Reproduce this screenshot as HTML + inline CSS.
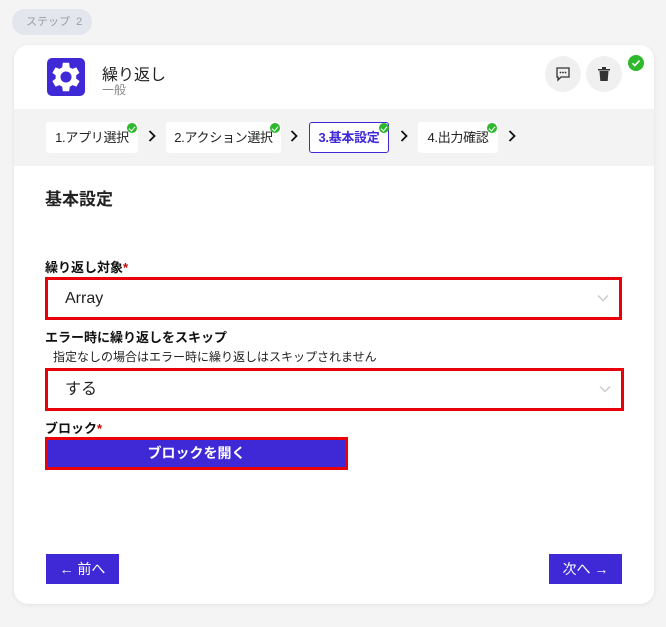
<!DOCTYPE html>
<html><head><meta charset="utf-8"><style>
*{box-sizing:border-box;margin:0;padding:0}
body{width:666px;height:627px;background:#f4f4f4;font-family:"Liberation Sans","Noto Sans CJK JP",sans-serif;position:relative;overflow:hidden;color:#222}
.abs{position:absolute}
.pill{left:12px;top:9px;width:80px;height:26px;border-radius:13px;background:#e4e6ee;color:#9a9cab;font-size:11px;line-height:26px;padding-left:14px}
.card{left:14px;top:45px;width:640px;height:559px;background:#fff;border-radius:14px;overflow:hidden;box-shadow:0 1px 4px rgba(0,0,0,.08)}
.band{left:0;top:64px;width:640px;height:57px;background:#f3f3f3}
.step{top:77px;height:31px;background:#fff;border-radius:3px;font-size:13px;line-height:31px;text-align:center;color:#222;white-space:nowrap;letter-spacing:-0.3px}
.chk{width:10px;height:10px;border-radius:50%;background:#2eb82e;top:78px}
.chk:after{content:"";position:absolute;left:3px;top:2px;width:3px;height:5px;border:solid #fff;border-width:0 1.3px 1.3px 0;transform:rotate(40deg)}
.chev{top:85px}
.lbl{font-size:13px;font-weight:bold;color:#111}
.sel{left:31px;width:577px;height:43px;border:3px solid #e8000b;background:#fff;font-size:16px;padding-left:17px;line-height:37px}
.btn{background:#3f28d6;color:#fff;font-size:14px;text-align:center;white-space:nowrap}
</style></head><body>
<div class="abs pill">ステップ&nbsp;&nbsp;2</div>
<div class="abs card">
  <div class="abs" style="left:33px;top:13px;width:38px;height:38px;background:#3f28d6;border-radius:5px">
    <svg width="38" height="38" viewBox="0 0 24 24"><path fill="#fff" d="M19.4 13a7.5 7.5 0 0 0 0-2l2.1-1.6-2-3.5-2.5 1a7 7 0 0 0-1.7-1L15 3h-4l-.4 2.9a7 7 0 0 0-1.7 1l-2.5-1-2 3.5L6.5 11a7.5 7.5 0 0 0 0 2l-2.1 1.6 2 3.5 2.5-1a7 7 0 0 0 1.7 1L11 21h4l.4-2.9a7 7 0 0 0 1.7-1l2.5 1 2-3.5zM13 15.5A3.5 3.5 0 1 1 13 8.5a3.5 3.5 0 0 1 0 7z" transform="translate(-1 0)"/></svg>
  </div>
  <div class="abs" style="left:88px;top:16px;font-size:16px">繰り返し</div>
  <div class="abs" style="left:88px;top:36px;font-size:12px;color:#888">一般</div>
  <div class="abs" style="left:531px;top:11px;width:36px;height:36px;border-radius:50%;background:#f0f0f0">
    <svg class="abs" style="left:10px;top:10px" width="16" height="16" viewBox="0 0 16 16"><path d="M2 2h12v9H6l-3 3v-3H2z" fill="none" stroke="#333" stroke-width="1.3"/><circle cx="5.5" cy="6.5" r=".9" fill="#333"/><circle cx="8" cy="6.5" r=".9" fill="#333"/><circle cx="10.5" cy="6.5" r=".9" fill="#333"/></svg>
  </div>
  <div class="abs" style="left:572px;top:11px;width:36px;height:36px;border-radius:50%;background:#f0f0f0">
    <svg class="abs" style="left:11px;top:10px" width="14" height="16" viewBox="0 0 14 16"><rect x="1" y="3" width="12" height="1.5" fill="#333"/><rect x="5" y="1" width="4" height="2" fill="#333"/><path d="M2.5 5h9l-.8 10H3.3z" fill="#333"/></svg>
  </div>
  <div class="abs" style="left:614px;top:10px;width:16px;height:16px;border-radius:50%;background:#2eb82e"><svg width="16" height="16" viewBox="0 0 16 16"><path d="M4.5 8.3l2.3 2.3 4.7-5" fill="none" stroke="#fff" stroke-width="1.6"/></svg></div>
  <div class="abs band"></div>
  <div class="abs step" style="left:32px;width:92px">1.アプリ選択</div>
  <div class="abs chk" style="left:113px"></div>
  <svg class="abs chev" style="left:134px" width="8" height="12" viewBox="0 0 8 12"><path d="M1.5 1l5 5-5 5" fill="none" stroke="#111" stroke-width="1.8"/></svg>
  <div class="abs step" style="left:152px;width:115px">2.アクション選択</div>
  <div class="abs chk" style="left:256px"></div>
  <svg class="abs chev" style="left:276px" width="8" height="12" viewBox="0 0 8 12"><path d="M1.5 1l5 5-5 5" fill="none" stroke="#111" stroke-width="1.8"/></svg>
  <div class="abs step" style="left:295px;width:80px;border:1px solid #3f28d6;color:#3f28d6;font-weight:bold;line-height:29px">3.基本設定</div>
  <div class="abs chk" style="left:365px"></div>
  <svg class="abs chev" style="left:386px" width="8" height="12" viewBox="0 0 8 12"><path d="M1.5 1l5 5-5 5" fill="none" stroke="#111" stroke-width="1.8"/></svg>
  <div class="abs step" style="left:404px;width:80px">4.出力確認</div>
  <div class="abs chk" style="left:473px"></div>
  <svg class="abs chev" style="left:494px" width="8" height="12" viewBox="0 0 8 12"><path d="M1.5 1l5 5-5 5" fill="none" stroke="#111" stroke-width="1.8"/></svg>
  <div class="abs" style="left:31px;top:140px;font-size:17px;font-weight:bold">基本設定</div>
  <div class="abs lbl" style="left:31px;top:212px">繰り返し対象<span style="color:#c00">*</span></div>
  <div class="abs sel" style="top:232px">Array<svg class="abs" style="right:10px;top:14px" width="12" height="8" viewBox="0 0 12 8"><path d="M1 1.5l5 5 5-5" fill="none" stroke="#ccc" stroke-width="1.5"/></svg></div>
  <div class="abs lbl" style="left:31px;top:282px">エラー時に繰り返しをスキップ</div>
  <div class="abs" style="left:39px;top:303px;font-size:12px">指定なしの場合はエラー時に繰り返しはスキップされません</div>
  <div class="abs sel" style="top:323px;left:31px;width:579px">する<svg class="abs" style="right:10px;top:14px" width="12" height="8" viewBox="0 0 12 8"><path d="M1 1.5l5 5 5-5" fill="none" stroke="#ccc" stroke-width="1.5"/></svg></div>
  <div class="abs lbl" style="left:31px;top:373px">ブロック<span style="color:#c00">*</span></div>
  <div class="abs btn" style="left:31px;top:392px;width:303px;height:33px;border:3px solid #e8000b;line-height:27px;font-weight:bold">ブロックを開く</div>
  <div class="abs btn" style="left:32px;top:509px;width:73px;height:30px;line-height:30px">← 前へ</div>
  <div class="abs btn" style="left:535px;top:509px;width:73px;height:30px;line-height:30px">次へ →</div>
</div>
</body></html>
